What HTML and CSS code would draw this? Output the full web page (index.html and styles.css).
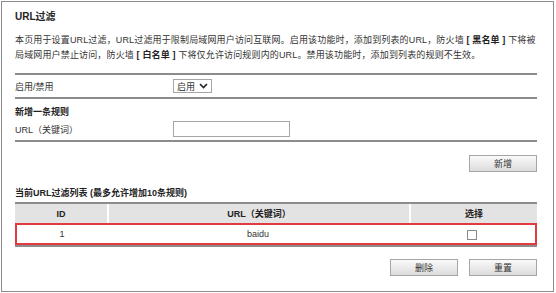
FILE: index.html
```html
<!DOCTYPE html>
<html lang="zh-CN">
<head>
  <meta charset="UTF-8">
  <title>URL过滤</title>
  <link rel="stylesheet" href="styles.css">
</head>
<body>

  <div class="panel">
    <h2 class="titulo">URL过滤</h2>
    <p class="intro">本页用于设置URL过滤，URL过滤用于限制局域网用户访问互联网。启用该功能时，添加到列表的URL，防火墙 <b>[ 黑名单 ]</b> 下将被<br>局域网用户禁止访问，防火墙 <b>[ 白名单 ]</b> 下将仅允许访问规则内的URL。禁用该功能时，添加到列表的规则不生效。</p>

    <div class="fila fila-estado linea">
      <span class="etiqueta">启用/禁用</span>
      <div class="selector">
        <span>启用</span>
        <svg width="9" height="6" viewBox="0 0 9 6"><polyline points="1,1 4.5,4.5 8,1" fill="none" stroke="#222" stroke-width="1.6"/></svg>
      </div>
    </div>

    <div class="bloque linea">
      <div class="subtitulo">新增一条规则</div>
      <div class="fila">
        <span class="etiqueta">URL（关键词）</span>
        <input class="campo" type="text">
      </div>
    </div>

    <div class="acciones acciones-nuevo">
      <button class="boton">新增</button>
    </div>

    <div class="subtitulo lista">当前URL过滤列表 (最多允许增加10条规则)</div>

    <!-- Lista de reglas -->
    <table class="reglas">
      <thead>
        <tr>
          <th class="col-id">ID</th>
          <th class="col-url">URL（关键词）</th>
          <th class="col-sel">选择</th>
        </tr>
      </thead>
      <tbody>
        <tr class="marcada">
          <td>1</td>
          <td>baidu</td>
          <td><input class="casilla" type="checkbox"></td>
        </tr>
      </tbody>
    </table>

    <div class="acciones acciones-lista">
      <button class="boton">删除</button>
      <button class="boton">重置</button>
    </div>
  </div>

</body>
</html>
```

FILE: styles.css
```css
:root {
  --gris-linea: #8c8c8c;
  --gris-borde: #a6a6a6;
  --gris-cabecera: #e3e3e3;
  --rojo: #e23b3f;
  --texto: #333;
}

body {
  margin: 0;
  font-family: "Liberation Sans", "Noto Sans CJK SC", sans-serif;
  font-size: 9px;
  color: var(--texto);
}

.panel {
  box-sizing: border-box;
  width: 553px;
  height: 291px;
  margin: 1px 0 0 1px;
  padding: 0 16px 0 13px;
  border: 1px solid var(--gris-linea);
}

.titulo {
  margin: 8px 0 0;
  font-size: 10px;
  line-height: 14px;
  font-weight: bold;
  color: #222;
}

.intro {
  margin: 9px 0 0;
  padding-bottom: 10px;
  line-height: 15px;
  letter-spacing: 0.15px;
  white-space: nowrap;
  border-bottom: 2px solid var(--gris-linea);
}

.intro b {
  color: #222;
}

.linea {
  border-bottom: 2px solid var(--gris-linea);
}

/* FILAS */
.fila {
  display: flex;
  align-items: center;
  height: 20px;
}

.fila-estado {
  height: 22px;
}

.etiqueta {
  width: 158px;
}

.selector {
  display: inline-flex;
  align-items: center;
  gap: 4px;
  height: 12px;
  padding: 0 3px;
  border: 1px solid var(--gris-borde);
}

.bloque {
  padding: 6px 0 1px;
}

.subtitulo {
  line-height: 14px;
  font-weight: bold;
  color: #222;
}

.campo {
  box-sizing: border-box;
  width: 117px;
  height: 16px;
  padding: 0;
  border: 1px solid var(--gris-borde);
}

/* BOTONES */
.acciones {
  display: flex;
  justify-content: flex-end;
  gap: 11px;
}

.acciones-nuevo {
  margin-top: 13px;
}

.acciones-lista {
  margin-top: 12px;
}

.boton {
  width: 68px;
  height: 17px;
  padding: 0;
  border: 1px solid var(--gris-borde);
  background: linear-gradient(#fafafa, #dcdcdc);
  font: inherit;
  color: var(--texto);
}

.lista {
  margin: 14px 0 2px;
}

/* TABLA */
.reglas {
  width: 522px;
  border-collapse: separate;
  border-spacing: 0;
  border-top: 2px solid var(--gris-linea);
  border-bottom: 2px solid var(--gris-linea);
}

.reglas th {
  height: 19px;
  padding: 0;
  background-color: var(--gris-cabecera);
  font-weight: bold;
  color: #222;
}

.reglas th + th {
  border-left: 2px solid #fff;
}

.col-id {
  width: 92px;
}

.col-url {
  width: 300px;
}

.reglas td {
  height: 18px;
  padding: 0;
  text-align: center;
  line-height: 18px;
}

.marcada td {
  border-top: 2px solid var(--rojo);
  border-bottom: 2px solid var(--rojo);
}

.marcada td:first-child {
  border-left: 2px solid var(--rojo);
}

.marcada td:last-child {
  border-right: 2px solid var(--rojo);
}

.casilla {
  appearance: none;
  display: inline-block;
  width: 10px;
  height: 10px;
  margin: 0;
  vertical-align: middle;
  border: 1px solid #8a8a8a;
  background: #fff;
}
```
